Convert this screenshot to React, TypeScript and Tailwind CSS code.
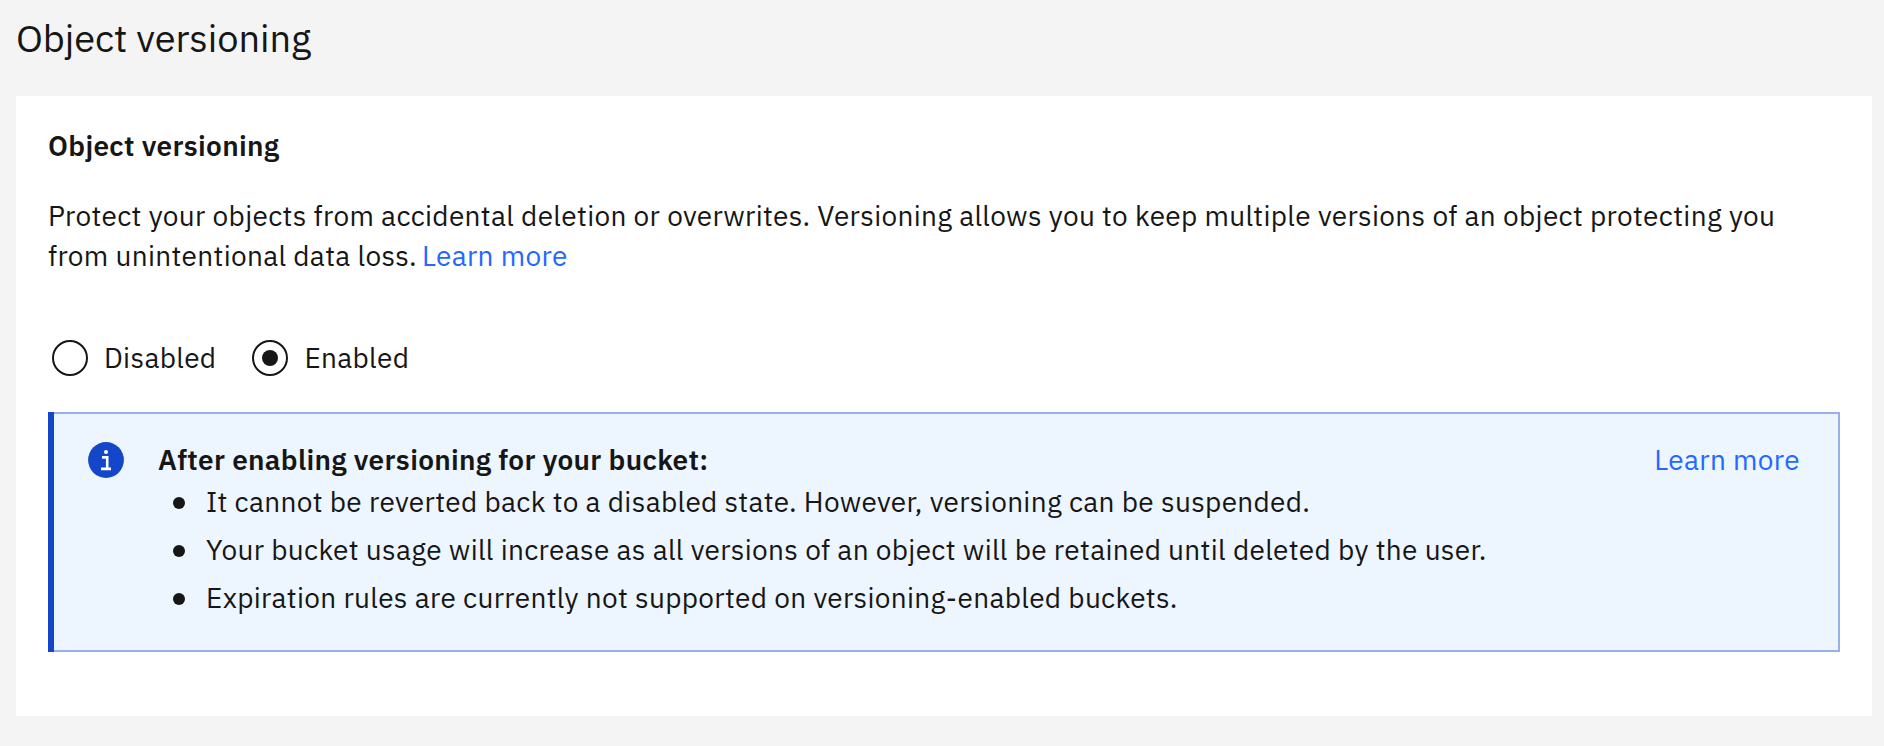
const sans = "font-['IBM_Plex_Sans','Open_Sans',sans-serif]";

const notes = [
  "It cannot be reverted back to a disabled state. However, versioning can be suspended.",
  "Your bucket usage will increase as all versions of an object will be retained until deleted by the user.",
  "Expiration rules are currently not supported on versioning-enabled buckets.",
];

function RadioOption({ label, checked = false }: { label: string; checked?: boolean }) {
  return (
    <label className="flex items-center gap-4">
      <input type="radio" name="versioning" defaultChecked={checked} className="sr-only" />
      <span className="flex size-9 items-center justify-center rounded-full border-2 border-[#161616]">
        {checked && <span className="size-4 rounded-full bg-[#161616]" />}
      </span>
      <span className="leading-9">{label}</span>
    </label>
  );
}

function InfoIcon() {
  return (
    <svg viewBox="0 0 36 36" className="mt-[2px] size-9 shrink-0" aria-hidden="true">
      <circle cx="18" cy="18" r="17.9" fill="#1346c8" />
      <circle cx="18" cy="10" r="2" fill="#fff" />
      <path d="M14 15.4h5.2v11M13 26.9h10" fill="none" stroke="#fff" strokeWidth="2.6" />
    </svg>
  );
}

export default function App() {
  return (
    <main className={`h-[746px] bg-[#f4f4f4] px-4 pr-3 pt-3 text-[28px] leading-10 tracking-[0.32px] text-[#161616] ${sans}`}>
      <h1 className="h-14 text-[38px] leading-[52px] tracking-[-0.06px]">Object versioning</h1>
      <section className="mt-7 h-[620px] bg-white px-8 pt-[30px]">
        <h2 className="font-semibold">Object versioning</h2>
        <div className="mt-[30px]">
          <p>
            Protect your objects from accidental deletion or overwrites. Versioning allows you to keep multiple versions of an object protecting you
          </p>
          <p className="flex gap-[5px]">
            <span>from unintentional data loss.</span>
            <a className="text-[#2468ff]">Learn more</a>
          </p>
        </div>
        <div className="mt-16 flex gap-9 pl-1">
          <RadioOption label="Disabled" />
          <RadioOption label="Enabled" checked />
        </div>
        <div className="mt-9 flex h-60 border-2 border-l-0 border-[#97b0e9] bg-[#edf5ff]">
          <div className="-my-[2px] w-[6px] shrink-0 bg-[#1346c8]" />
          <div className="flex flex-1 items-start pl-[34px] pr-[38px] pt-[26px]">
            <InfoIcon />
            <div className="ml-[34px] flex-1">
              <h3 className="font-semibold">After enabling versioning for your bucket:</h3>
              <ul className="mt-[2px] flex flex-col gap-2">
                {notes.map((note) => (
                  <li key={note} className="flex items-center gap-[21px] pl-[15px]">
                    <span className="mt-[2px] size-3 rounded-full bg-[#161616]" />
                    <span>{note}</span>
                  </li>
                ))}
              </ul>
            </div>
            <a className="text-[#2468ff]">Learn more</a>
          </div>
        </div>
      </section>
    </main>
  );
}
